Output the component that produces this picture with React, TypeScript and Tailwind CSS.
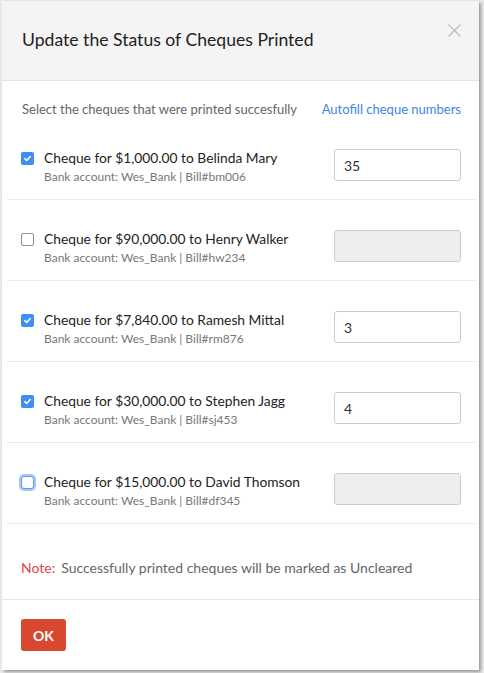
import React from "react";

type Row = {
  amount: string;
  name: string;
  bill: string;
  checked: boolean;
  value?: string;
  focused?: boolean;
};

const rows: Row[] = [
  { amount: "$1,000.00", name: "Belinda Mary", bill: "bm006", checked: true, value: "35" },
  { amount: "$90,000.00", name: "Henry Walker", bill: "hw234", checked: false },
  { amount: "$7,840.00", name: "Ramesh Mittal", bill: "rm876", checked: true, value: "3" },
  { amount: "$30,000.00", name: "Stephen Jagg", bill: "sj453", checked: true, value: "4" },
  { amount: "$15,000.00", name: "David Thomson", bill: "df345", checked: false, focused: true },
];

function Checkbox({ checked, focused }: { checked: boolean; focused?: boolean }) {
  if (checked) {
    return (
      <span className="mt-[4px] flex h-[13px] w-[13px] shrink-0 items-center justify-center rounded-[2px] bg-[#3d8ef8]">
        <svg width="9" height="9" viewBox="0 0 9 9" fill="none">
          <path d="M1.8 4.7 L3.7 6.5 L7.2 2.5" stroke="white" strokeWidth="1.6" strokeLinecap="round" strokeLinejoin="round" />
        </svg>
      </span>
    );
  }
  if (focused) {
    return (
      <span className="mt-[4px] block h-[13px] w-[13px] shrink-0 rounded-[3px] border border-[#5b9cf0] bg-white shadow-[0_0_0_2px_#a6c8f7]" />
    );
  }
  return <span className="mt-[4px] block h-[13px] w-[13px] shrink-0 rounded-[2px] border border-[#8f8f8f] bg-white" />;
}

export default function App() {
  return (
    <div className="h-[673px] w-[484px] overflow-hidden bg-[#e9e9e9] pl-[2px] pt-[1px]" style={{ fontFamily: "Lato, 'Open Sans', sans-serif" }}>
      <div className="flex h-[669px] w-[477px] flex-col bg-white shadow-[2px_2px_3px_rgba(0,0,0,0.35)]">
        <div className="relative flex h-[80px] shrink-0 items-center border-b border-[#e4e4e4] bg-[#f4f4f4] pl-[20px]">
          <h1 className="text-[17.6px] font-normal text-[#222]">Update the Status of Cheques Printed</h1>
          <svg className="absolute right-[18px] top-[23px]" width="13" height="13" viewBox="0 0 13 13">
            <path d="M0.5 0.5 L12.5 12.5 M12.5 0.5 L0.5 12.5" stroke="#bdbdbd" strokeWidth="1.3" />
          </svg>
        </div>
        <div className="pl-[5px] pr-[3px]">
          <div className="mt-[18px] flex h-[20px] items-center justify-between pl-[15px] pr-[15px] text-[13px] leading-[20px]">
            <span className="text-[#666]">Select the cheques that were printed succesfully</span>
            <span className="text-[#3b86e8]">Autofill cheque numbers</span>
          </div>
          {rows.map((r, i) => (
            <div key={i} className="flex items-start border-b border-[#ececec] pb-[14px] pl-[14px] pr-[15px] pt-[29px]">
              <Checkbox checked={r.checked} focused={r.focused} />
              <div className="ml-[10px] flex-1">
                <div className="text-[13.8px] leading-[20px] text-[#222]">
                  Cheque for {r.amount} to {r.name}
                </div>
                <div className="mt-[1px] text-[12px] leading-[16px] text-[#777]">
                  Bank account: Wes_Bank | Bill#{r.bill}
                </div>
              </div>
              {r.checked ? (
                <div className="mt-[1px] flex h-[32px] w-[127px] items-center rounded-[3px] border border-[#cccccc] bg-white pl-[9px] text-[14px] text-[#333]">
                  {r.value}
                </div>
              ) : (
                <div className="mt-[1px] h-[32px] w-[127px] rounded-[3px] border border-[#cccccc] bg-[#eeeeee]" />
              )}
            </div>
          ))}
          <div className="mt-[34px] pl-[14px] text-[14px] leading-[20px]">
            <span className="text-[#e0474b]">Note:</span>
            <span className="ml-[6px] text-[#666]">Successfully printed cheques will be marked as Uncleared</span>
          </div>
        </div>
        <div className="mt-[21px] border-t border-[#e8e8e8] pl-[19px] pt-[19px]">
          <button className="flex h-[32px] w-[45px] items-center justify-center rounded-[3px] bg-[#d9482e] text-[14px] font-bold text-white">
            OK
          </button>
        </div>
      </div>
    </div>
  );
}
